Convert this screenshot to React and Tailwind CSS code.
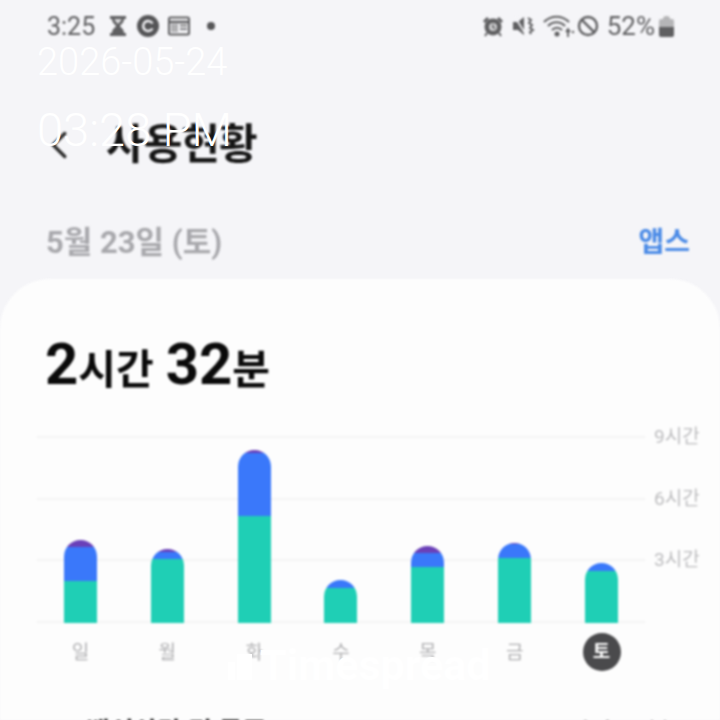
import React from 'react';
import { ChevronLeft } from 'lucide-react';

const bars = [
  { top: 540, purple: 547, blue: 581 },
  { top: 549, purple: 552, blue: 559 },
  { top: 450, purple: 453, blue: 516 },
  { top: 580, purple: 580, blue: 588 },
  { top: 546, purple: 553, blue: 567 },
  { top: 543, purple: 544, blue: 558 },
  { top: 563, purple: 563, blue: 571 },
];

const days = ['일', '월', '화', '수', '목', '금', '토'];
const BASE = 623;

const StatusIcons = () => (
  <div className="flex items-center text-[#5f5f61]">
    {/* alarm */}
    <svg width="22" height="22" viewBox="0 0 22 22" fill="currentColor">
      <circle cx="11" cy="12" r="8.500" />
      <circle cx="11" cy="12" r="4" fill="#d0d0d2" />
      <path d="M11 9.500v3l2 1" stroke="#3f3f41" strokeWidth="1.200" fill="none" />
      <path d="M1 6l4-4 2 2-4 4zM21 6l-4-4-2 2 4 4z" />
      <path d="M5 18l-2 3M17 18l2 3" stroke="currentColor" strokeWidth="2" />
    </svg>
    {/* mute */}
    <svg className="ml-[8px]" width="23" height="22" viewBox="0 0 23 22" fill="currentColor">
      <path d="M1 7h5l6-5v18l-6-5H1z" />
      <path d="M3 2l11 18" stroke="#f5f5f8" strokeWidth="1.600" />
      <path d="M16 3l3 2-2 3 3 2-2 3 3 2-3 2 1 2" stroke="currentColor" strokeWidth="2" fill="none" />
    </svg>
    {/* wifi */}
    <svg className="ml-[8px]" width="32" height="24" viewBox="0 0 32 24" fill="none" stroke="currentColor" strokeWidth="2.200">
      <path d="M1 8C8 1 19 1 26 8" />
      <path d="M5 12c5-5 12-5 17 0" />
      <path d="M9 16c3-3 7-3 10 0" />
      <circle cx="14" cy="20" r="2.500" fill="currentColor" stroke="none" />
      <path d="M25 23v-7M23 18l2-3 2 3" strokeWidth="1.800" />
      <circle cx="30" cy="18" r="1.200" fill="currentColor" stroke="none" />
    </svg>
    <svg className="ml-[2px]" width="22" height="22" viewBox="0 0 22 22" fill="none" stroke="currentColor" strokeWidth="2.400">
      <circle cx="11" cy="11" r="9" />
      <path d="M4.600 4.600l12.800 12.800" />
    </svg>
    <span className="ml-[8px] text-[26px] leading-none">52%</span>
    {/* battery */}
    <div className="ml-[4px] flex flex-col items-center">
      <div className="h-[3px] w-[7px] rounded-t-sm bg-[#b5b5b7]" />
      <div className="flex h-[18px] w-[15px] flex-col overflow-hidden rounded-[2px]">
        <div className="h-[8px] bg-[#b5b5b7]" />
        <div className="flex-1 bg-[#5f5f61]" />
      </div>
    </div>
  </div>
);

const LeftIcons = () => (
  <div className="flex items-center text-[#5f5f61]">
    <svg className="ml-[14px]" width="18" height="22" viewBox="0 0 18 22" fill="currentColor">
      <path d="M1 1h16v3h-2c0 4-3 5-4 7 1 2 4 3 4 7h2v3H1v-3h2c0-4 3-5 4-7-1-2-4-3-4-7H1z" />
      <path d="M5.500 4h7c0 2-2 3-3.500 5C7.500 7 5.500 6 5.500 4z" fill="#d8d8da" />
    </svg>
    <div className="ml-[10px] flex h-[22px] w-[22px] items-center justify-center rounded-full bg-[#555557]">
      <svg width="14" height="14" viewBox="0 0 14 14" fill="none" stroke="#f5f5f8" strokeWidth="2.400">
        <path d="M11.500 4.500A5 5 0 1 0 11.500 9.500" />
      </svg>
    </div>
    <svg className="ml-[9px]" width="22" height="20" viewBox="0 0 22 20" fill="none" stroke="currentColor" strokeWidth="2">
      <rect x="1" y="1.500" width="20" height="17" rx="1.500" />
      <path d="M1 6h20" strokeWidth="2.500" />
      <rect x="3" y="8" width="7" height="8" fill="#b0b0b2" stroke="none" />
      <path d="M12 9.500h7M12 13h7" strokeWidth="1.500" />
    </svg>
    <div className="ml-[17px] h-[8px] w-[8px] rounded-full bg-[#555557]" />
  </div>
);

export default function App() {
  return (
    <div className="relative h-[720px] w-[720px] overflow-hidden bg-[#f5f5f8] font-['Roboto','Noto_Sans_CJK_KR',sans-serif]">
      <div className="blur-[0.9px]">
        <div className="flex h-[50px] items-center justify-between pl-[47px] pr-[46px] pt-[2px]">
          <div className="flex items-center">
            <span className="text-[25px] leading-none text-[#5f5f61]">3:25</span>
            <LeftIcons />
          </div>
          <StatusIcons />
        </div>

        <div className="flex h-[229px] flex-col">
          <div className="mt-[74px] flex h-[42px] items-center pl-[36px]">
            <ChevronLeft size={46} strokeWidth={1.800} className="text-[#2a2a2a]" />
            <h1 className="ml-[24px] text-[42px] font-bold leading-none tracking-[-1px] text-[#151515]">사용현황</h1>
          </div>
          <div className="mt-[61px] flex items-center justify-between pl-[46px] pr-[30px]">
            <span className="text-[31px] font-bold leading-none text-[#a8a8ac]">5월 23일 (토)</span>
            <span className="text-[28px] font-bold leading-none text-[#4a8ae6]">앱스</span>
          </div>
        </div>

        <div className="h-[441px] rounded-t-[50px] bg-[#fdfdfd] pt-[56px]">
          <div className="flex h-[60px] items-baseline pl-[45px] font-bold leading-none text-[#0a0a0a]">
            <span className="text-[58px]">2</span>
            <span className="text-[41px]">시간</span>
            <span className="ml-[12px] text-[58px]">32</span>
            <span className="text-[41px]">분</span>
          </div>

          <div className="ml-[37px] mt-[41px] w-[608px]">
            <div className="relative">
              <div className="flex h-[187px] flex-col">
                {['9시간', '6시간', '3시간'].map((label) => (
                  <div key={label} className="flex h-[62px] border-t-2 border-[#f4f4f4]">
                    <span className="ml-[617px] mt-[-13px] whitespace-nowrap text-[19px] leading-[24px] text-[#bdbdbf]">{label}</span>
                  </div>
                ))}
                <div className="border-t-2 border-[#f4f4f4]" />
              </div>

              <div className="absolute bottom-0 left-0 grid h-[187px] w-[608px] grid-cols-7 items-end">
                {bars.map((bar, i) => (
                  <div key={i} className="flex justify-center">
                    <div
                      className="flex w-[33px] flex-col overflow-hidden rounded-t-[17px]"
                      style={{ height: BASE - bar.top }}
                    >
                      <div className="bg-[#6a40b8]" style={{ height: bar.purple - bar.top }} />
                      <div className="bg-[#3a78fa]" style={{ height: bar.blue - bar.purple }} />
                      <div className="flex-1 bg-[#1fcfb5]" />
                    </div>
                  </div>
                ))}
              </div>
            </div>

            <div className="mt-[10px] grid grid-cols-7">
              {days.map((day, i) => (
                <div key={day} className="flex h-[38px] items-center justify-center">
                  {i === 6 ? (
                    <span className="flex h-[38px] w-[38px] items-center justify-center rounded-full bg-[#4a4a4c] text-[19px] font-bold text-white">{day}</span>
                  ) : (
                    <span className="pt-[3px] text-[19px] text-[#b0b0b2]">{day}</span>
                  )}
                </div>
              ))}
            </div>
          </div>

          <div className="mt-[48px] flex items-center justify-between pl-[46px] pr-[50px]">
            <div className="flex items-center">
              <div className="h-[12px] w-[12px] rounded-full bg-[#1fcfb5]" />
              <span className="ml-[28px] text-[26px] font-bold leading-none text-[#222222]">백신상담 및 통증</span>
            </div>
            <span className="text-[25px] leading-none text-[#8a8a8c]">1시간 30분</span>
          </div>
        </div>
      </div>

      {/* overlay stamp */}
      <div className="absolute left-[37px] top-[41px] text-[38px] font-light leading-[42px] text-white">2026-05-24</div>
      <div className="absolute left-[37px] top-[104px] text-[47px] font-light leading-[52px] text-white">03:28 PM</div>
      <div className="absolute left-[228px] top-[644px] flex items-center text-white">
        <svg width="24" height="30" viewBox="0 0 24 30" fill="currentColor">
          <rect x="0" y="12" width="7" height="18" />
          <rect x="9" y="4" width="15" height="26" />
        </svg>
        <span className="ml-[8px] text-[43px] font-bold leading-[42px]">Timespread</span>
      </div>
    </div>
  );
}
